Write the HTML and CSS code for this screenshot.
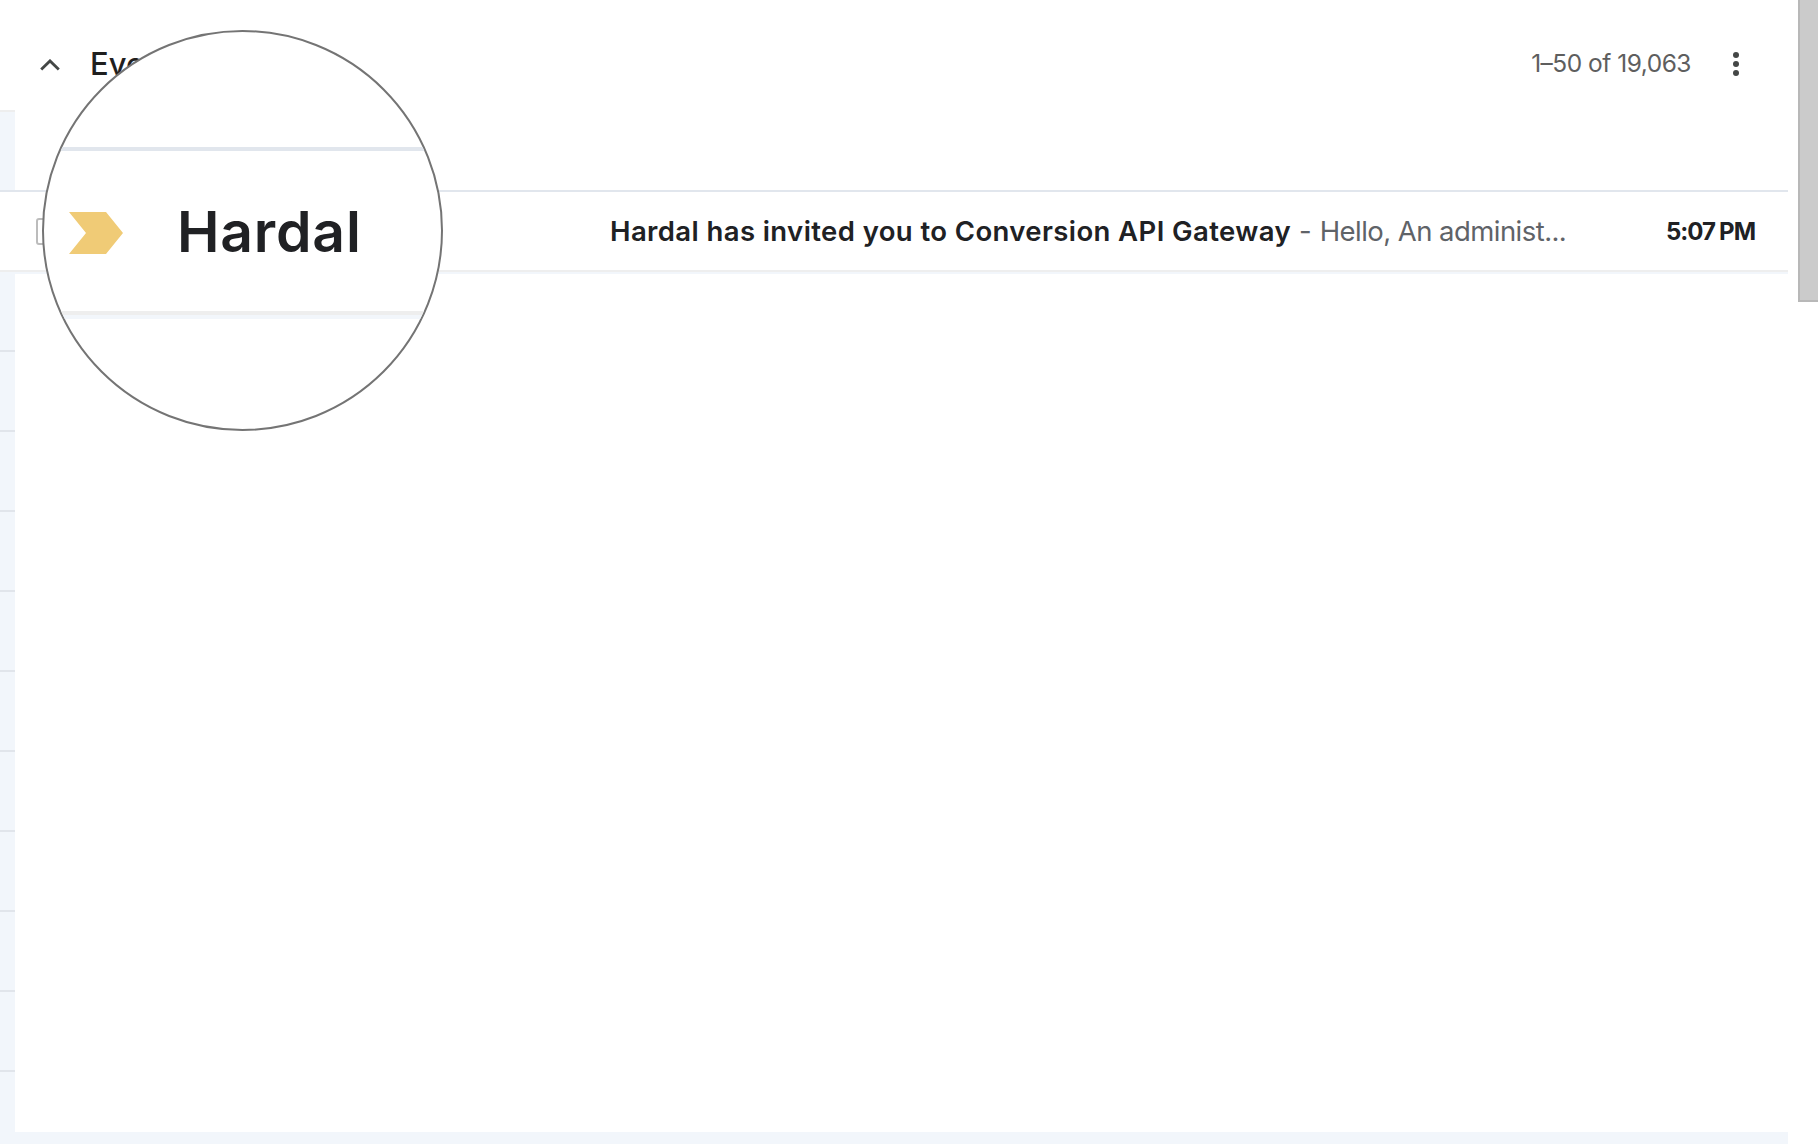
FILE: index.html
```html
<!DOCTYPE html>
<html lang="en">
<head>
    <meta charset="UTF-8">
    <meta name="viewport" content="width=device-width, initial-scale=1.0">
    <title>Inbox</title>
    <link rel="stylesheet" href="styles.css">
</head>
<body>
    <main class="inbox">
        <header class="section-head">
            <svg class="chevron" width="20" height="12" viewBox="0 0 20 12"><path d="M1.2 10.6 10 1.9l8.8 8.7" fill="none" stroke="#444746" stroke-width="2.8"/></svg>
            <h1>Everything else</h1>
            <span class="count">1–50 of 19,063</span>
            <svg class="more" width="6" height="24" viewBox="0 0 6 24" fill="#444746"><circle cx="3" cy="3" r="3"/><circle cx="3" cy="12" r="3"/><circle cx="3" cy="21" r="3"/></svg>
        </header>
        <div class="strip strip-top"></div>
        <div class="mail">
            <span class="checkbox"></span>
            <p class="preview"><b>Hardal has invited you to Conversion API Gateway</b><span class="dash">-</span><span class="snippet">Hello, An administ...</span></p>
            <time>5:07 PM</time>
        </div>
        <div class="rows">
            <div class="strip"></div>
            <div class="strip"></div>
            <div class="strip"></div>
            <div class="strip"></div>
            <div class="strip"></div>
            <div class="strip"></div>
            <div class="strip"></div>
            <div class="strip"></div>
            <div class="strip"></div>
            <div class="strip"></div>
            <div class="strip last"></div>
        </div>
        <footer></footer>
    </main>
    <aside class="scrollbar"><div class="thumb"></div></aside>

    <div class="magnifier">
        <div class="lens">
            <svg width="54" height="42" viewBox="0 0 54 42"><path d="M0 0H37L54 21 37 42H0L17 21Z" fill="#f0cb76"/></svg>
            <span>Hardal</span>
        </div>
    </div>
</body>
</html>
```
FILE: styles.css
```css
* {
    box-sizing: border-box;
    margin: 0;
    padding: 0;
}
body {
    display: flex;
    width: 1818px;
    height: 1144px;
    overflow: hidden;
    position: relative;
    background-color: #fff;
    color: #202124;
    font-family: Inter, "Liberation Sans", sans-serif;
}
.inbox {
    width: 1788px;
    height: 1144px;
}
.section-head {
    display: flex;
    align-items: center;
    height: 110px;
    padding: 18px 49px 0 40px;
}
.chevron {
    margin-top: 2px;
}
h1 {
    margin-left: 30px;
    font-size: 31px;
    font-weight: 500;
    line-height: 40px;
    color: #1f1f1f;
}
.count {
    margin: -2px 0 0 auto;
    font-size: 24.5px;
    color: #5e5e5e;
    letter-spacing: -0.5px;
}
.more {
    margin-left: 42px;
}
.strip {
    width: 15px;
    height: 80px;
    background-color: #f2f6fb;
    border-bottom: 2px solid #e1e5eb;
}
.strip-top {
    border-top: 2px solid #eee;
    border-bottom: none;
}
.mail {
    display: flex;
    align-items: center;
    height: 84px;
    padding: 0 33px 0 36px;
    border-top: 2px solid #e1e6ed;
    border-bottom: 2px solid #f2f6fb;
    box-shadow: inset 0 -2px #eee;
}
.checkbox {
    width: 27px;
    height: 27px;
    margin-top: -1px;
    border: 2px solid #bcbcbc;
    border-radius: 3px;
}
.preview {
    display: flex;
    width: 956px;
    margin: -2px 0 0 547px;
    font-size: 27.5px;
    white-space: nowrap;
}
.preview b {
    font-weight: 600;
    letter-spacing: 0.4px;
}
.dash {
    margin: 0 8px;
    color: #5f6368;
}
.snippet {
    color: #5f6368;
    letter-spacing: -0.55px;
}
time {
    margin: -2px 0 0 auto;
    font-size: 24px;
    font-weight: 700;
    letter-spacing: -1px;
    word-spacing: -0.5px;
}
.rows {
    height: 858px;
}
.rows .strip:first-child {
    height: 78px;
}
.rows .last {
    height: 60px;
    border: none;
}
footer {
    height: 12px;
    background-color: #f2f6fb;
}
.scrollbar {
    width: 20px;
    margin-left: 10px;
}
.thumb {
    height: 302px;
    background-color: #cbcbcb;
    border-left: 2px solid #b8b8b8;
    border-bottom: 2px solid #b8b8b8;
}
/* zoomed part of the row */
.magnifier {
    position: absolute;
    left: 42px;
    top: 30px;
    width: 401px;
    height: 401px;
    padding-top: 115px;
    border: 2px solid #747474;
    border-radius: 50%;
    background-color: #fff;
    overflow: hidden;
}
.lens {
    display: flex;
    align-items: center;
    height: 172px;
    padding-left: 25px;
    border-top: 4px solid #e1e6ed;
    border-bottom: 4px solid #f2f6fb;
    box-shadow: inset 0 -4px #eee;
}
.lens span {
    margin: -4px 0 0 54px;
    font-size: 57px;
    font-weight: 600;
    line-height: 1;
    letter-spacing: 0.8px;
}
```
